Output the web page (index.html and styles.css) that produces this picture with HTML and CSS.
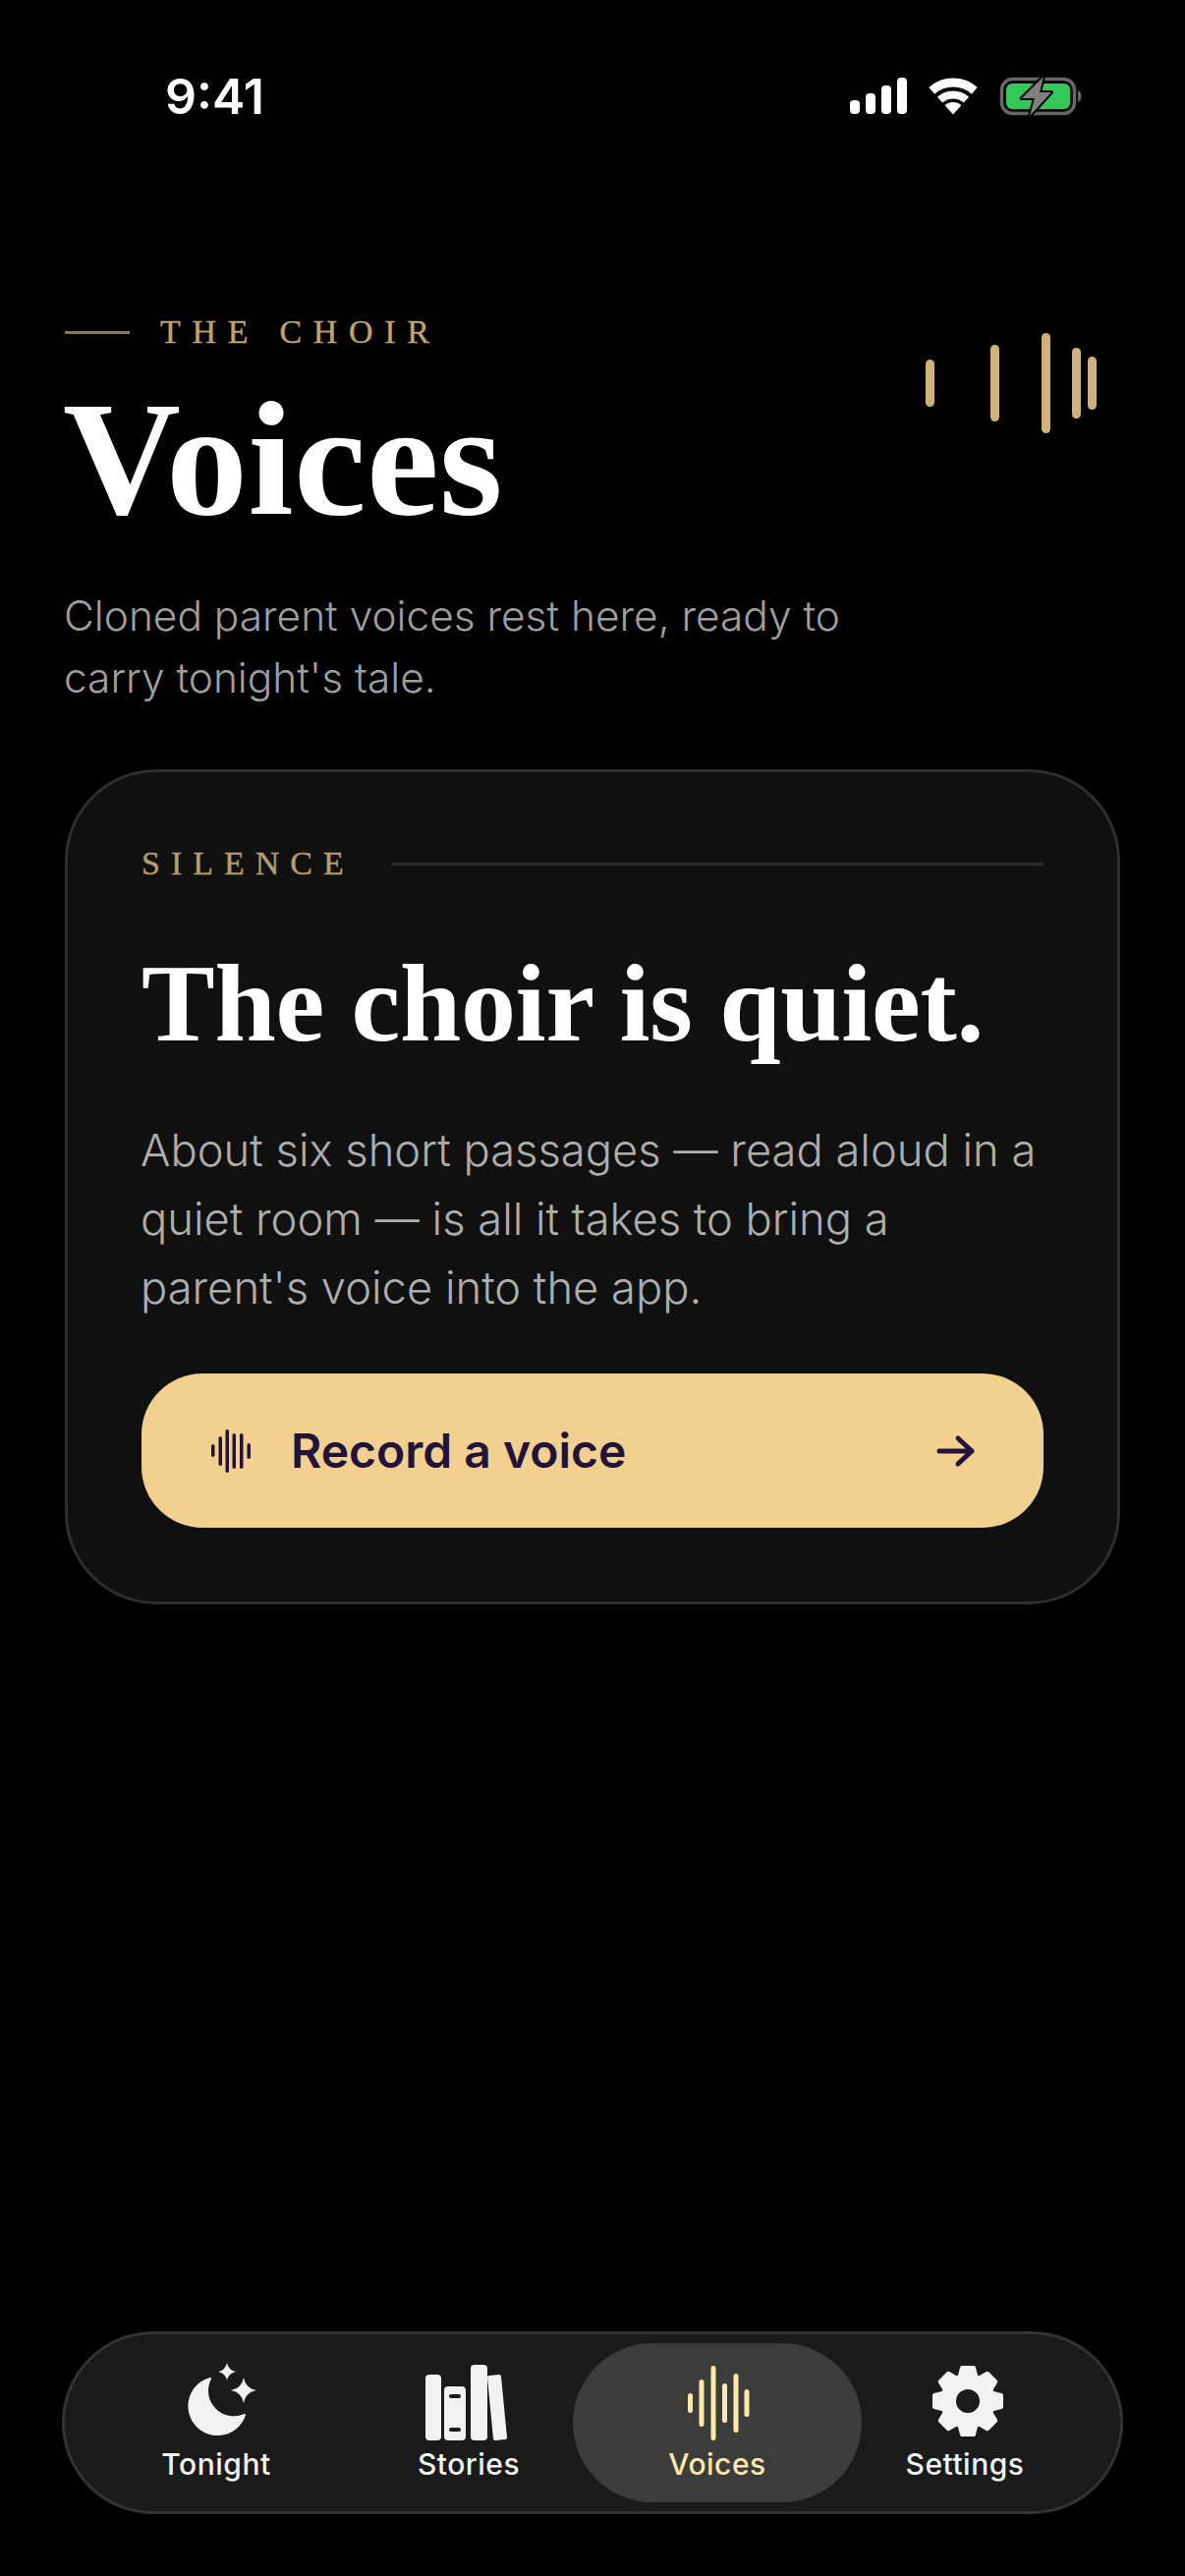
FILE: index.html
```html
<!DOCTYPE html>
<html lang="en">
<head>
    <meta charset="UTF-8">
    <meta name="viewport" content="width=device-width, initial-scale=1.0">
    <title>Voices</title>
    <link rel="stylesheet" href="styles.css">
</head>
<body>

    <div class="status-bar">
        <span class="clock">9:41</span>
        <div class="status-icons">
            <svg width="58" height="38" viewBox="0 0 58 38" fill="#fff">
                <rect x="0" y="23" width="10" height="14" rx="4"/>
                <rect x="16" y="16" width="10" height="21" rx="4"/>
                <rect x="32" y="8" width="10" height="29" rx="4"/>
                <rect x="48" y="0" width="10" height="37" rx="4"/>
            </svg>
            <svg width="50" height="38" viewBox="0 0 50 38" fill="none" stroke="#fff">
                <path d="M3.3 13.4A32.5 32.5 0 0 1 46.7 13.4" stroke-width="9"/>
                <path d="M11.6 22.6A20 20 0 0 1 38.4 22.6" stroke-width="8"/>
                <path d="M25 37.5L16.6 28.2A12.5 12.5 0 0 1 33.4 28.2Z" fill="#fff" stroke="none"/>
            </svg>
            <svg width="84" height="42" viewBox="0 0 84 42">
                <rect x="2.5" y="3.5" width="74" height="35" rx="11" fill="none" stroke="#666" stroke-width="3.5"/>
                <rect x="7" y="8" width="65" height="26" rx="6" fill="#34c759"/>
                <path d="M80 15c2.500 1 3.500 3.500 3.500 6s-1 5-3.500 6z" fill="#666"/>
                <path d="M45 1L23 23H36L31 41L53 17H41Z" fill="#808080" stroke="#000" stroke-width="4" paint-order="stroke" stroke-linejoin="round"/>
            </svg>
        </div>
    </div>

    <main class="content">
        <header class="page-head">
            <div class="head-text">
                <div class="eyebrow"><span class="eyebrow-rule"></span>THE CHOIR</div>
                <h1>Voices</h1>
            </div>
            <svg class="head-wave" width="174" height="102" viewBox="0 0 174 102" fill="#cfb27a">
                <rect x="0" y="27" width="9" height="48" rx="4.500"/>
                <rect x="66" y="12" width="9" height="78" rx="4.500"/>
                <rect x="118" y="0" width="9" height="102" rx="4.500"/>
                <rect x="149" y="15" width="9" height="72" rx="4.500"/>
                <rect x="165" y="24" width="9" height="54" rx="4.500"/>
            </svg>
        </header>
        <p class="intro">Cloned parent voices rest here, ready to<br>carry tonight's tale.</p>

        <section class="card">
            <div class="card-label"><span>SILENCE</span><span class="card-rule"></span></div>
            <h2>The choir is quiet.</h2>
            <p class="card-copy">About six short passages — read aloud in a quiet room — is all it takes to bring a parent's voice into the app.</p>
            <button class="record-btn">
                <svg width="42" height="44" viewBox="0 0 42 44" fill="#23133a">
                    <rect x="0" y="15" width="3.500" height="13" rx="1.750"/>
                    <rect x="7.500" y="7" width="3.500" height="30" rx="1.750"/>
                    <rect x="14.500" y="0" width="3.500" height="44" rx="1.750"/>
                    <rect x="21.500" y="4" width="3.500" height="36" rx="1.750"/>
                    <rect x="29" y="4" width="3.500" height="36" rx="1.750"/>
                    <rect x="36.500" y="14" width="3.500" height="16" rx="1.750"/>
                </svg>
                <span class="record-label">Record a voice</span>
                <svg class="record-arrow" width="40" height="34" viewBox="0 0 40 34" fill="none" stroke="#23133a" stroke-width="5" stroke-linecap="round" stroke-linejoin="round">
                    <path d="M3 17H36M22 4L36 17L22 30"/>
                </svg>
            </button>
        </section>
    </main>

    <nav class="tabbar">
        <a class="tab tab-tonight">
            <svg width="90" height="80" viewBox="0 0 90 80" fill="#f2f2f2">
                <path d="M35 17A29 29 0 1 0 70 54A27 27 0 0 1 35 17Z" stroke="#f2f2f2" stroke-width="2" stroke-linejoin="round"/>
                <path d="M52 1Q53.500 8.500 61 10Q53.500 11.500 52 19Q50.500 11.500 43 10Q50.500 8.500 52 1Z"/>
                <path d="M69 16Q71 27 82 29Q71 31 69 42Q67 31 56 29Q67 27 69 16Z"/>
            </svg>
            <span>Tonight</span>
        </a>
        <a class="tab tab-stories">
            <svg width="90" height="80" viewBox="0 0 90 80" fill="#f2f2f2">
                <rect x="4" y="13" width="16" height="67" rx="4"/>
                <path fill-rule="evenodd" d="M27 25H41a4 4 0 0 1 4 4V76a4 4 0 0 1-4 4H27a4 4 0 0 1-4-4V29a4 4 0 0 1 4-4ZM30 33a2 2 0 0 0 0 4h8a2 2 0 0 0 0-4ZM30 67a2 2 0 0 0 0 4h8a2 2 0 0 0 0-4Z"/>
                <rect x="50" y="3" width="17" height="77" rx="4"/>
                <path d="M69 16L79 15L85 77L75 78Z" stroke="#f2f2f2" stroke-width="4" stroke-linejoin="round"/>
            </svg>
            <span>Stories</span>
        </a>
        <a class="tab tab-voices active">
            <svg width="90" height="80" viewBox="0 0 90 80" fill="#fde9a8">
                <rect x="12" y="32" width="5" height="20" rx="2.500"/>
                <rect x="23.500" y="18" width="5" height="48" rx="2.500"/>
                <rect x="35.500" y="4" width="5" height="76" rx="2.500"/>
                <rect x="47" y="22" width="5" height="40" rx="2.500"/>
                <rect x="58.500" y="12" width="5" height="60" rx="2.500"/>
                <rect x="69.500" y="28" width="5" height="28" rx="2.500"/>
            </svg>
            <span>Voices</span>
        </a>
        <a class="tab tab-settings">
            <svg width="90" height="80" viewBox="-45 -40 90 80" fill="#f2f2f2">
                <circle cx="0" cy="0" r="20" fill="none" stroke="#f2f2f2" stroke-width="16"/>
                <g stroke="#f2f2f2" stroke-width="4" stroke-linejoin="round">
                    <path d="M-6 -34H6L9 -22H-9Z"/>
                    <path d="M-6 -34H6L9 -22H-9Z" transform="rotate(45)"/>
                    <path d="M-6 -34H6L9 -22H-9Z" transform="rotate(90)"/>
                    <path d="M-6 -34H6L9 -22H-9Z" transform="rotate(135)"/>
                    <path d="M-6 -34H6L9 -22H-9Z" transform="rotate(180)"/>
                    <path d="M-6 -34H6L9 -22H-9Z" transform="rotate(225)"/>
                    <path d="M-6 -34H6L9 -22H-9Z" transform="rotate(270)"/>
                    <path d="M-6 -34H6L9 -22H-9Z" transform="rotate(315)"/>
                </g>
            </svg>
            <span>Settings</span>
        </a>
    </nav>

</body>
</html>
```

FILE: styles.css
```css
* {
    box-sizing: border-box;
}

html, body {
    margin: 0;
    height: 100%;
}

body {
    width: 1206px;
    height: 2622px;
    background-color: #000;
    color: #fff;
    font-family: Inter, "Noto Sans", sans-serif;
    display: flex;
    flex-direction: column;
    overflow: hidden;
}

/* status bar */
.status-bar {
    display: flex;
    justify-content: space-between;
    align-items: center;
    height: 76px;
    margin-top: 60px;
    padding: 0 105px 0 168px;
}

.clock {
    font-size: 50px;
    font-weight: 600;
    line-height: 1;
}

.status-icons {
    display: flex;
    align-items: center;
    gap: 22px;
}

/* page head */
.content {
    padding: 0 66px;
}

.page-head {
    display: flex;
    justify-content: space-between;
    align-items: flex-start;
    margin-top: 182px;
}

.eyebrow {
    display: flex;
    align-items: center;
    gap: 31px;
    font-family: "Liberation Serif", serif;
    font-size: 34px;
    line-height: 40px;
    letter-spacing: 11.7px;
    color: #c0a36b;
    -webkit-text-stroke: 0.4px #c0a36b;
}

.eyebrow-rule {
    width: 66px;
    height: 3px;
    background: #8c7a55;
}

h1 {
    margin: 24px 0 0 -2px;
    font-family: "Liberation Serif", serif;
    font-size: 166px;
    font-weight: 700;
    line-height: 170px;
    letter-spacing: 0.4px;
}

.head-wave {
    margin: 21px 24px 0 0;
}

.intro {
    margin: 43px 0 0 -1px;
    font-size: 42.4px;
    font-weight: 350;
    line-height: 63px;
    color: #9e9e9e;
}

/* empty card */
.card {
    margin-top: 62px;
    padding: 73px 75px 0;
    width: 1074px;
    height: 850px;
    background: #101010;
    border: 3px solid #2e2e2e;
    border-radius: 93px;
}

.card-label {
    display: flex;
    align-items: center;
    gap: 38px;
    font-family: "Liberation Serif", serif;
    font-size: 34px;
    line-height: 40px;
    letter-spacing: 11px;
    color: #b89e6a;
    -webkit-text-stroke: 0.4px #b89e6a;
}

.card-rule {
    flex: 1;
    height: 3px;
    background: #2e2e2e;
}

h2 {
    margin: 57px 0 0;
    font-family: "Liberation Serif", serif;
    font-size: 112px;
    font-weight: 700;
    line-height: 130px;
    letter-spacing: -0.3px;
}

.card-copy {
    margin: 50px 0 0 -1px;
    font-size: 45.3px;
    font-weight: 350;
    line-height: 70px;
    color: #adadad;
}

.record-btn {
    display: flex;
    align-items: center;
    width: 918px;
    height: 157px;
    margin-top: 52px;
    padding: 0 69px 0 71px;
    border: 0;
    border-radius: 62px;
    background: #f2d08f;
    font-family: Inter, sans-serif;
}

.record-label {
    margin-left: 39px;
    font-size: 48px;
    font-weight: 600;
    color: #23133a;
}

.record-arrow {
    margin-left: auto;
}

/* tab bar */
.tabbar {
    display: flex;
    width: 1080px;
    height: 186px;
    margin: auto 0 63px 63px;
    padding: 9px 0 9px 3px;
    background: #1a1a1a;
    border: 3px solid #333;
    border-radius: 93px;
}

.tab {
    display: flex;
    flex-direction: column;
    align-items: center;
    padding-top: 19px;
    color: #f2f2f2;
    font-size: 30px;
    font-weight: 500;
    line-height: 36px;
    letter-spacing: 0.5px;
}

.tab span {
    margin-top: 6px;
}

.tab svg {
    flex: none;
}

.tab-tonight { width: 302px; }
.tab-tonight svg { margin-left: 7px; }
.tab-stories { width: 212px; }
.tab-stories svg { margin-left: -6px; }
.tab-voices { width: 294px; }
.tab-voices svg { margin-left: 6px; }
.tab-settings { width: 210px; }
.tab-settings svg { margin-left: 6px; }

.tab.active {
    background: #3c3c3c;
    border-radius: 81px;
    color: #fde9a8;
}
```
